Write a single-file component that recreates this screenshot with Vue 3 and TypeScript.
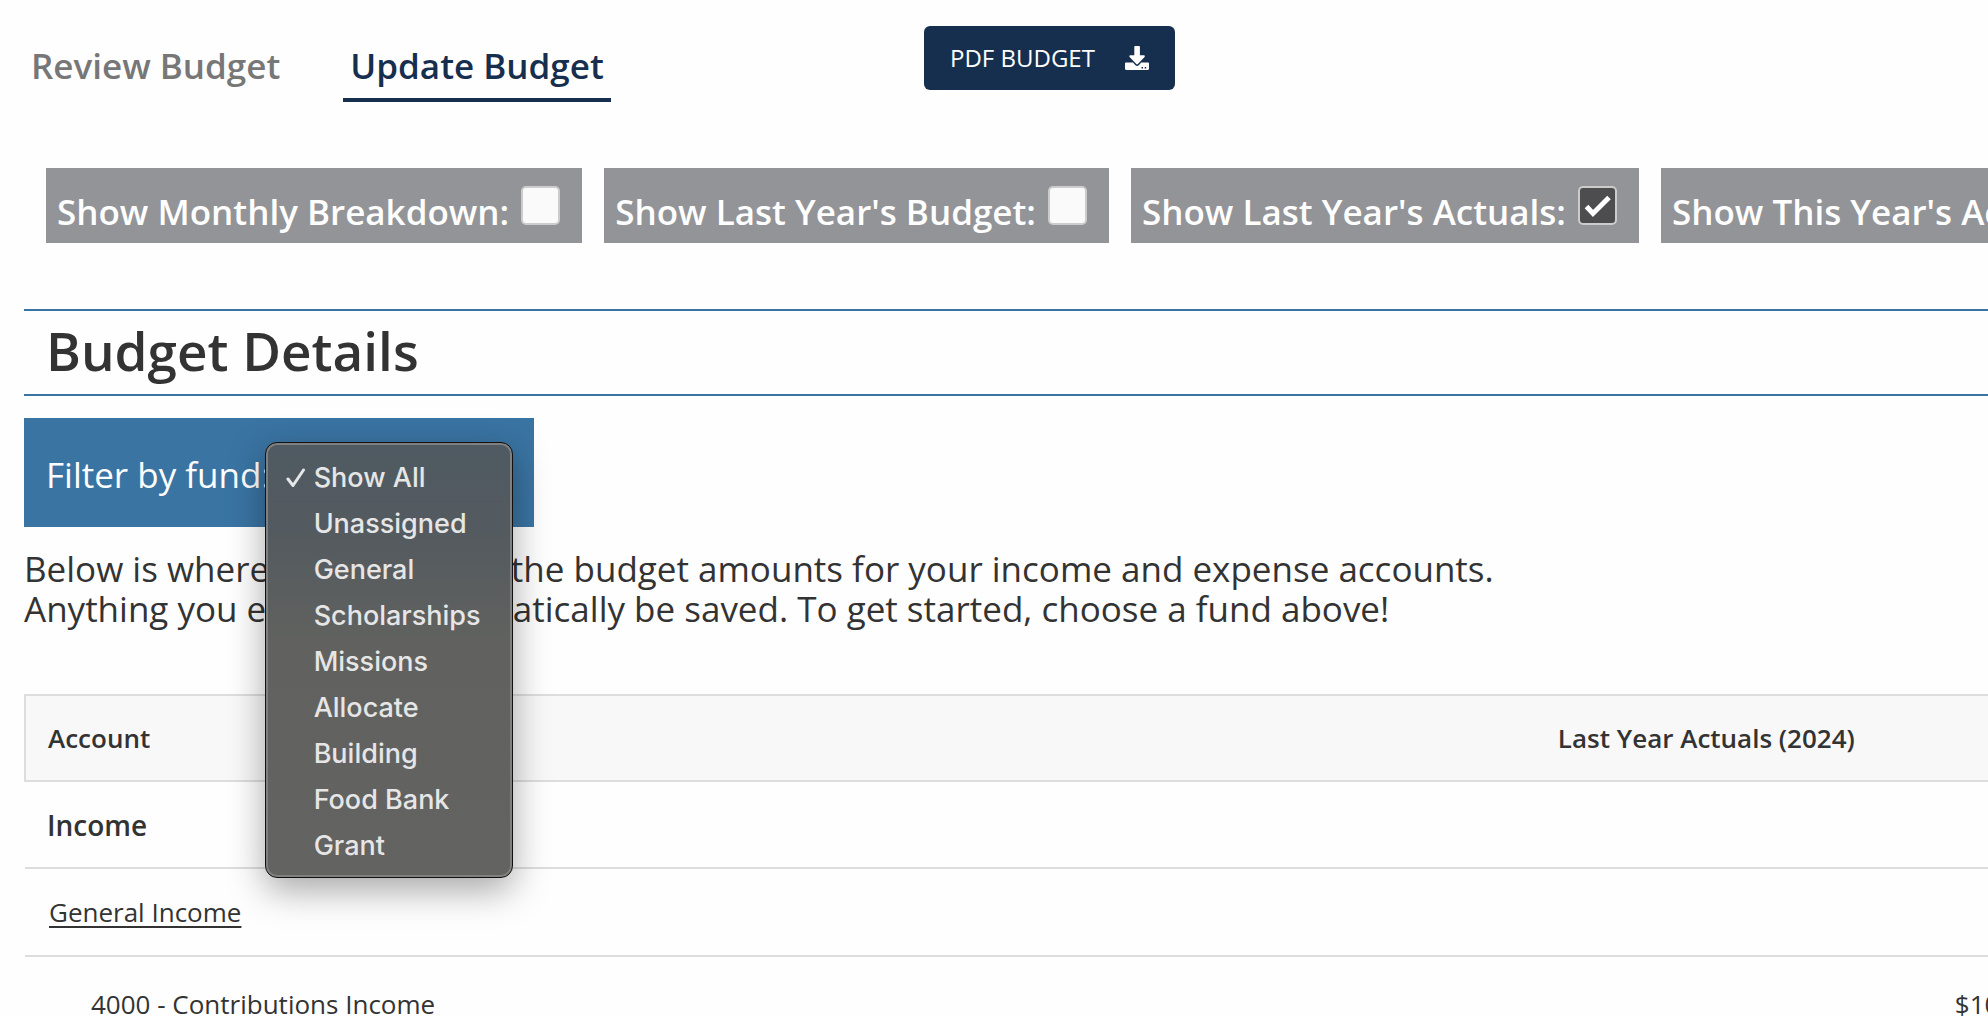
<script setup lang="ts">
import { ref } from 'vue'

interface Toggle {
  id: string
  label: string
  checked: boolean
}

const toggles = ref<Toggle[]>([
  { id: 'monthly', label: 'Show Monthly Breakdown:', checked: false },
  { id: 'last-budget', label: "Show Last Year's Budget:", checked: false },
  { id: 'last-actuals', label: "Show Last Year's Actuals:", checked: true },
  { id: 'this-actuals', label: "Show This Year's Actuals:", checked: false },
])

const funds: string[] = [
  'Show All',
  'Unassigned',
  'General',
  'Scholarships',
  'Missions',
  'Allocate',
  'Building',
  'Food Bank',
  'Grant',
]
const selected = ref<string>('Show All')
</script>

<template>
  <main class="page">
    <header class="top">
      <nav class="tabs">
        <a href="#review" class="tab">Review Budget</a>
        <a href="#update" class="tab active">Update Budget</a>
      </nav>
      <button type="button" class="pdf">
        PDF BUDGET
        <svg class="pdf-icon" viewBox="0 0 24 24" aria-hidden="true">
          <path
            fill="currentColor"
            d="M10.300 0h3.600c.6 0 1 .4 1 1v8.300h4c.9 0 1.300 1 .7 1.600l-6.700 7.200a1.100 1.100 0 0 1-1.600 0l-6.700-7.200c-.6-.6-.2-1.600.7-1.600h4V1c0-.6.4-1 1-1z"
          />
          <path
            fill="currentColor"
            fill-rule="evenodd"
            d="M1.200 16.500h6.800l2.200 2.400a2.600 2.600 0 0 0 3.800 0l2.200-2.400h6.600c.7 0 1.200.5 1.200 1.200v5.100c0 .7-.5 1.200-1.200 1.200H1.200C.5 24 0 23.500 0 22.800v-5.100c0-.7.5-1.200 1.200-1.200zM16.500 21v1.500H18V21zm3.200 0v1.500h1.500V21z"
          />
        </svg>
      </button>
    </header>

    <section class="toggles">
      <div v-for="t in toggles" :key="t.id" class="toggle">
        <label :for="t.id">{{ t.label }}</label>
        <span class="box">
          <input :id="t.id" v-model="t.checked" type="checkbox" />
          <svg v-if="t.checked" class="tick" viewBox="0 0 39 39" aria-hidden="true">
            <path d="M8.500 20.500l6.500 7L31 11.500" fill="none" stroke="#fff" stroke-width="5" />
          </svg>
        </span>
      </div>
    </section>

    <h1 class="title">Budget Details</h1>

    <div class="filter">
      <label for="fund">Filter by fund:</label>
      <div class="picker">
        <select id="fund" v-model="selected">
          <option v-for="f in funds" :key="f">{{ f }}</option>
        </select>
        <ul class="menu" role="listbox" aria-label="Fund">
          <li v-for="f in funds" :key="f" role="option" :aria-selected="f === selected">
            <svg class="mark" viewBox="0 0 20 20" aria-hidden="true">
              <path
                v-if="f === selected"
                d="M2 11l5 6.500L17.500 2"
                fill="none"
                stroke="currentColor"
                stroke-width="3"
                stroke-linecap="round"
                stroke-linejoin="round"
              />
            </svg>
            {{ f }}
          </li>
        </ul>
      </div>
    </div>

    <p class="intro">
      Below is where you can enter the budget amounts for your income and expense accounts.<br />
      Anything you enter will automatically be saved. To get started, choose a fund above!
    </p>

    <table class="accounts">
      <thead>
        <tr>
          <th scope="col" class="name">Account</th>
          <th scope="col" class="actuals">Last Year Actuals (2024)</th>
          <th scope="col" class="amount"></th>
        </tr>
      </thead>
      <tbody>
        <tr>
          <td class="group" colspan="3">Income</td>
        </tr>
        <tr>
          <td class="subgroup" colspan="3"><a href="#general-income">General Income</a></td>
        </tr>
        <tr>
          <td class="child">4000 - Contributions Income</td>
          <td></td>
          <td class="amount">$10</td>
        </tr>
      </tbody>
    </table>
  </main>
</template>

<style>
body {
  margin: 0;
  background: #fefefe;
}
</style>

<style scoped>
.page {
  box-sizing: border-box;
  height: 100vh;
  overflow: hidden;
  padding: 26px 0 0 24px;
  font-family: 'Open Sans', 'Noto Sans', sans-serif;
  font-size: 35px;
  line-height: 40px;
  color: #333;
}
.top {
  display: flex;
  align-items: flex-start;
  height: 142px;
}
.tabs {
  display: flex;
  gap: 56px;
  flex: 0 0 900px;
}
.tab {
  padding: 20px 7px 12px;
  border-bottom: 4px solid transparent;
  font-weight: 600;
  color: #777;
  text-decoration: none;
}
.tab.active {
  color: #172f4f;
  border-color: #172f4f;
}
.pdf {
  display: flex;
  align-items: center;
  gap: 30px;
  height: 64px;
  padding: 0 26px;
  border: 0;
  border-radius: 6px;
  background: #172f4f;
  color: #fefefe;
  font: 24px/32px 'Open Sans', 'Noto Sans', sans-serif;
}
.pdf-icon {
  width: 24px;
  height: 24px;
}
.toggles {
  display: flex;
  gap: 22px;
  margin-left: 22px;
}
.toggle {
  display: flex;
  flex: none;
  gap: 12px;
  height: 75px;
  padding: 0 22px 0 11px;
  background: #939498;
  color: #fefefe;
  font-weight: 600;
}
.toggle label {
  padding-top: 24px;
}
.box {
  position: relative;
  width: 39px;
  height: 39px;
  margin-top: 18px;
}
.box input {
  appearance: none;
  display: block;
  box-sizing: border-box;
  width: 39px;
  height: 39px;
  margin: 0;
  border: 2px solid #ccc;
  border-radius: 5px;
  background: #fafafa;
}
.box input:checked {
  background: #4d4d4f;
}
.tick {
  position: absolute;
  inset: 0;
  pointer-events: none;
}
.title {
  margin: 66px 0 22px;
  padding: 5px 22px 8px;
  border: solid #3a74a3;
  border-width: 2px 0;
  font-size: 53px;
  line-height: 70px;
  font-weight: 600;
}
.filter {
  display: flex;
  align-items: center;
  box-sizing: border-box;
  width: 510px;
  height: 109px;
  padding: 4px 22px 0;
  background: #3a74a3;
  color: #fefefe;
}
.picker {
  position: relative;
  flex: 1;
}
.picker select {
  display: block;
  width: 200px;
  height: 44px;
  border: 0;
  background: transparent;
  color: transparent;
  font: inherit;
}
.menu {
  position: absolute;
  z-index: 1;
  top: -11px;
  left: -6px;
  box-sizing: border-box;
  width: 248px;
  margin: 0;
  padding: 12px 0 8px;
  border: 1px solid #111;
  border-radius: 12px;
  background: linear-gradient(#4f5a62, #555b5f 24%, #61625f 46%, #636361);
  box-shadow:
    inset 0 0 0 2px #808080,
    0 12px 36px rgba(0, 0, 0, 0.35);
  list-style: none;
  font: 500 27px/46px Inter, sans-serif;
  color: #e6e6e6;
}
.menu li {
  display: flex;
  align-items: center;
  gap: 8px;
  padding-left: 20px;
}
.mark {
  width: 20px;
  height: 20px;
}
.intro {
  margin: 22px 0 65px;
  white-space: nowrap;
}
.accounts {
  width: 110%;
  table-layout: fixed;
  border-collapse: collapse;
  font-size: 26px;
}
.accounts th,
.accounts td {
  box-sizing: border-box;
  height: 87px;
  padding: 0 22px;
  border-bottom: 2px solid #ddd;
  text-align: left;
  white-space: nowrap;
}
.accounts thead tr {
  border: 2px solid #ddd;
  background: #f8f8f8;
}
.accounts th {
  height: 86px;
  font-weight: 600;
}
.accounts .name {
  width: 70%;
}
.accounts .actuals {
  width: 419px;
}
.accounts .group {
  font-size: 28px;
  font-weight: 600;
}
.accounts .subgroup {
  height: 88px;
  padding-left: 24px;
}
.accounts .child {
  height: 96px;
  padding-left: 66px;
}
.accounts .amount {
  padding-left: 0;
}
.accounts a {
  color: inherit;
  text-underline-offset: 4px;
}
</style>
